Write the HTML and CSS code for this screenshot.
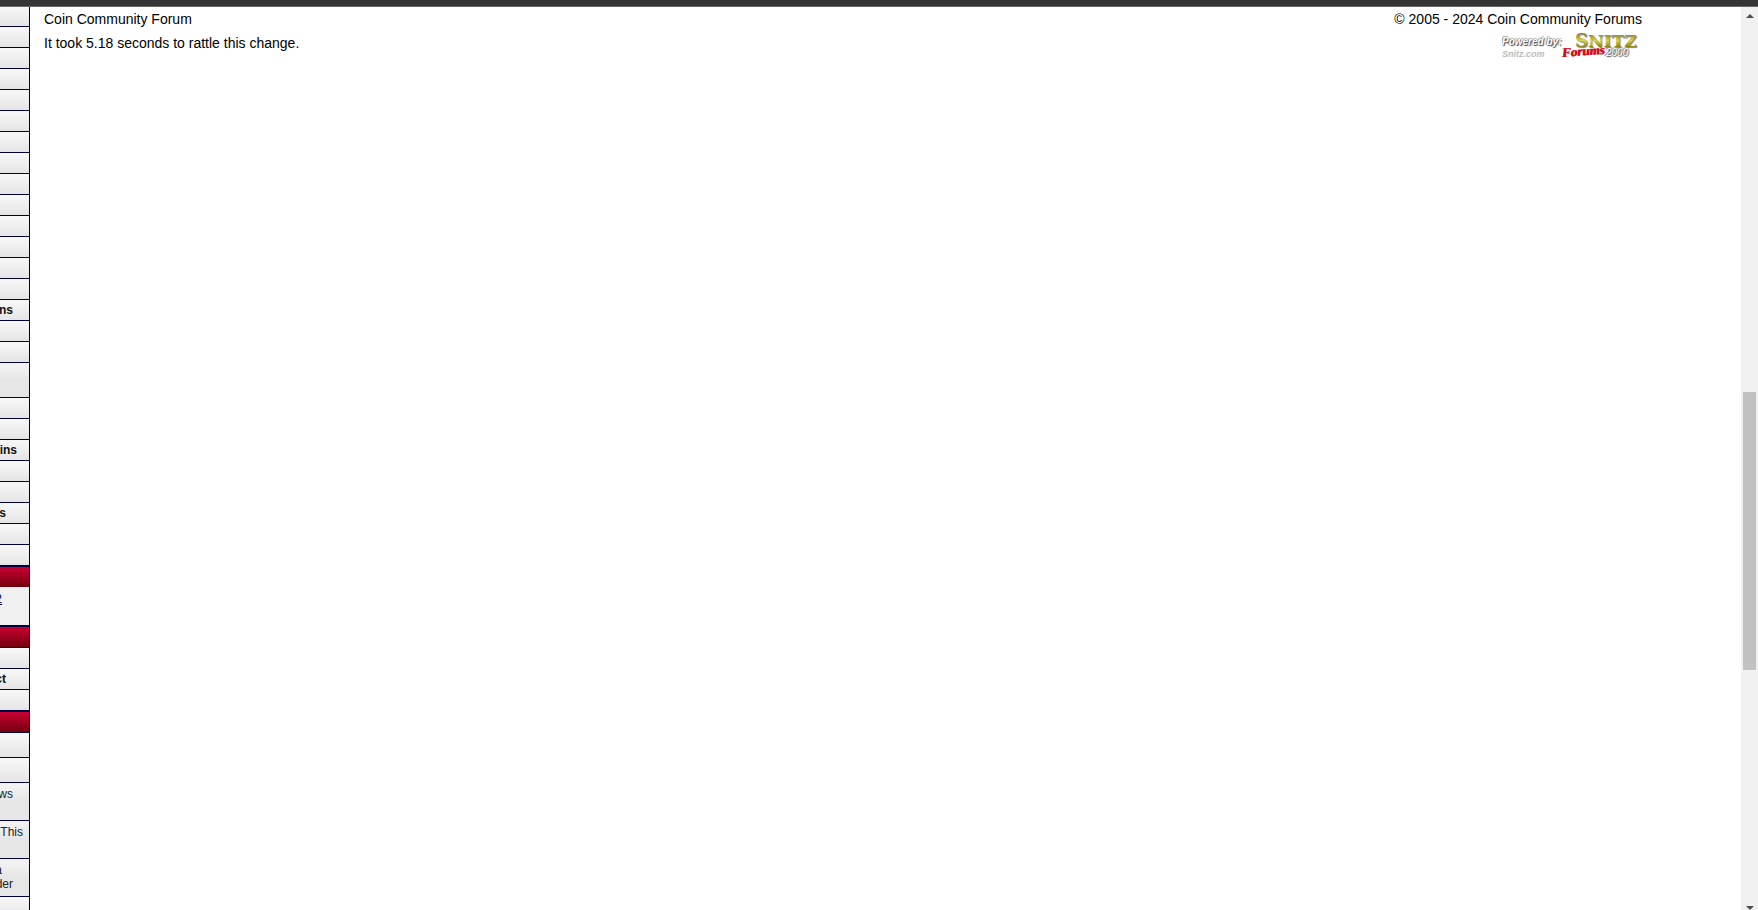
FILE: index.html
```html
<!DOCTYPE html>
<html lang="en">
<head>
  <meta charset="UTF-8">
  <title>Coin Community Forum</title>
  <link rel="stylesheet" href="styles.css">
</head>
<body>
  <div class="topbar"></div>
  <div class="page">
    <nav class="sidebar">
      <div class="row"></div>
      <div class="row"></div>
      <div class="row"></div>
      <div class="row"></div>
      <div class="row"></div>
      <div class="row"></div>
      <div class="row"></div>
      <div class="row"></div>
      <div class="row"></div>
      <div class="row"></div>
      <div class="row"></div>
      <div class="row"></div>
      <div class="row"></div>
      <div class="row"></div>
      <div class="row group end-l">ns</div>
      <div class="row"></div>
      <div class="row"></div>
      <div class="row mid"></div>
      <div class="row"></div>
      <div class="row"></div>
      <div class="row group end-m">ins</div>
      <div class="row"></div>
      <div class="row"></div>
      <div class="row group end-xl">s</div>
      <div class="row"></div>
      <div class="row last"></div>
      <div class="heading"></div>
      <div class="poll end-xxl"><a href="#">2</a></div>
      <div class="heading ruled"></div>
      <div class="row"></div>
      <div class="row group end-xl">ct</div>
      <div class="row last"></div>
      <div class="heading ruled"></div>
      <div class="row roomy"></div>
      <div class="row roomy"></div>
      <div class="row news end-l">ws</div>
      <div class="row news end-s">This</div>
      <div class="row news end-l"><span class="over">a</span>der</div>
      <div class="row"></div>
    </nav>

    <main class="content">
      <footer class="footer">
        <div class="about">
          <p>Coin Community Forum</p>
          <p>It took 5.18 seconds to rattle this change.</p>
        </div>
        <div class="credits">
          <p>© 2005 - 2024 Coin Community Forums</p>
          <a href="#" aria-label="Powered by Snitz Forums 2000">
            <svg class="snitz" width="140" height="30" viewBox="0 0 140 30">
              <defs>
                <linearGradient id="gold" x1="0" y1="0" x2="0" y2="1">
                  <stop offset="0.2" stop-color="#8f8620"/>
                  <stop offset="0.5" stop-color="#d9d24e"/>
                  <stop offset="0.8" stop-color="#8a8018"/>
                </linearGradient>
              </defs>
              <text class="powered" x="0" y="14">Powered by:</text>
              <text class="site" x="0" y="26">Snitz.com</text>
              <text class="brand" x="73" y="16" fill="url(#gold)"><tspan class="cap">S</tspan>NITZ</text>
              <text class="year" x="104" y="25">2000</text>
              <text class="forums" x="60" y="26" transform="rotate(-4 60 26)">Forums</text>
            </svg>
          </a>
        </div>
      </footer>
    </main>

    <div class="scrollbar">
      <span class="arrow up"></span>
      <span class="thumb"></span>
      <span class="arrow down"></span>
    </div>
  </div>
</body>
</html>
```

FILE: styles.css
```css
* {
  box-sizing: border-box;
}

body {
  margin: 0;
  height: 100vh;
  overflow: hidden;
  background: #fff;
  color: #000;
  font-family: "Liberation Sans", Arial, sans-serif;
  font-size: 14px;
}

p {
  margin: 0;
}

.topbar {
  position: relative;
  z-index: 1;
  height: 7px;
  margin-bottom: -1px;
  background: #353535;
  border-bottom: 1px solid #6b6868;
}

.page {
  display: flex;
  height: calc(100vh - 6px);
}

/* menu column, mostly scrolled off to the left */
.sidebar {
  flex: none;
  width: 200px;
  margin-left: -170px;
  border-right: 1px solid #00003f;
  font-size: 12px;
  line-height: 14px;
  text-align: right;
  color: #222;
}

.row {
  height: 21px;
  padding-top: 3px;
  border-bottom: 1px solid #00003f;
  background: linear-gradient(#f8f8f8, #e5e5e5);
}

.row.mid {
  height: 35px;
  background: linear-gradient(#f4f4f4, #e6e6e6 50%);
}

.row.last {
  height: 22px;
  border-bottom-width: 2px;
}

.row.roomy {
  height: 25px;
}

.row.news {
  height: 38px;
  padding-top: 4px;
  background: linear-gradient(#f4f4f4, #e6e6e6 50%);
}

.group {
  font-weight: bold;
  color: #111;
}

.heading {
  height: 20px;
  background: linear-gradient(#c80032, #75000c);
}

.heading.ruled {
  height: 21px;
  border-bottom: 1px solid #00003f;
}

.poll {
  height: 40px;
  padding-top: 5px;
  border-bottom: 2px solid #00003f;
  background: #f0f0f0;
}

.poll a {
  color: #00003f;
}

.over {
  display: block;
  padding-right: 11px;
}

.end-s { padding-right: 6px; }
.end-m { padding-right: 12px; }
.end-l { padding-right: 16px; }
.end-xl { padding-right: 23px; }
.end-xxl { padding-right: 27px; }

.content {
  flex: 1;
}

.footer {
  display: flex;
  justify-content: space-between;
  padding: 1px 99px 0 14px;
  line-height: 24px;
}

.credits {
  text-align: right;
}

.credits a {
  display: block;
}

.snitz {
  display: block;
  margin-left: auto;
}

.snitz text {
  font-family: "Liberation Sans", Arial, sans-serif;
  font-style: italic;
}

.snitz .powered {
  font-size: 10px;
  font-weight: bold;
  fill: #fff;
  text-shadow: 1px 1px 1px #444, -1px 0 1px #888, 0 -1px 1px #aaa;
}

.snitz .site {
  font-size: 9px;
  font-weight: bold;
  fill: #bbb;
}

.snitz .brand {
  font-family: "DejaVu Serif", serif;
  font-size: 17px;
  font-style: normal;
  font-weight: bold;
  text-shadow: 1px 1px 1px #777;
}

.snitz .cap {
  font-size: 18px;
}

.snitz .year {
  font-size: 10px;
  fill: #fff;
  text-shadow: 1px 1px 1px #444, -1px 0 1px #777, 0 -1px 1px #999;
}

.snitz .forums {
  font-family: "Liberation Serif", cursive;
  font-size: 13px;
  font-weight: bold;
  fill: #cc1020;
  text-shadow: 1px 0 0 #cc1020;
}

.scrollbar {
  display: flex;
  flex-direction: column;
  align-items: center;
  width: 17px;
  padding-top: 8px;
  background: #f1f1f1;
}

.arrow {
  border: 4px solid transparent;
}

.arrow.up {
  border-top: 0;
  border-bottom-color: #505050;
}

.arrow.down {
  margin-top: auto;
  border-bottom: 0;
  border-top-color: #505050;
}

.thumb {
  width: 13px;
  height: 31%;
  margin-top: 374px;
  background: #c1c1c1;
}
```
